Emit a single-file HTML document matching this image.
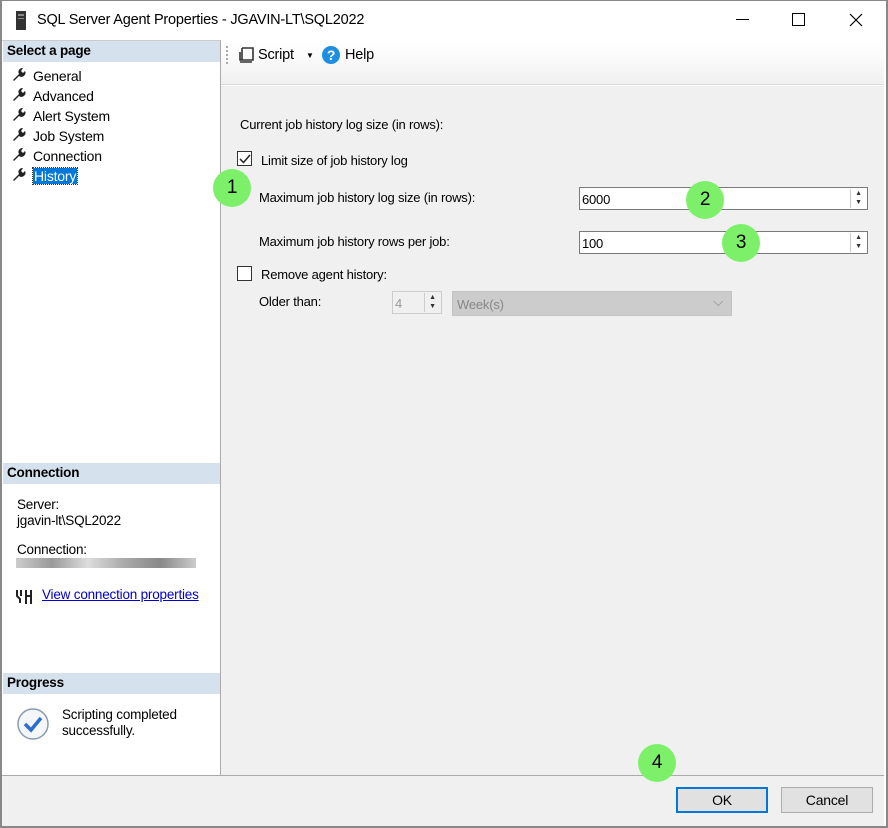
<!DOCTYPE html>
<html><head><style>
*{margin:0;padding:0;box-sizing:border-box}
body{width:888px;height:828px;background:#fff;font-family:"Liberation Sans",sans-serif;font-size:13px;color:#000;position:relative;overflow:hidden;letter-spacing:-0.2px}
.a{position:absolute}
.hdr{background:#d5e1ed;font-weight:bold;font-size:13.5px;padding:2px 0 0 4px;height:21px}
.g{border-radius:50%;background:#7df06a;width:38px;height:38px;text-align:center;line-height:38px;font-size:19px}
.inp{background:#fff;border:1px solid #7a7a7a;height:23px;padding:4px 0 0 2px;font-size:13px}
.spin{position:absolute;right:1px;top:1px;width:16px;height:19px;border-left:1px solid #ccc;font-size:7px;line-height:9px;text-align:center;color:#333}
.cb{width:15px;height:15px;border:1px solid #333;background:#fff}
</style></head><body>
<div class="a" style="left:0;top:0;width:888px;height:828px;border:2px solid #888;border-top:1px solid #888"></div>
<svg class="a" style="left:15px;top:11px" width="12" height="19"><rect x="1" y="0" width="10" height="19" fill="#333"/><rect x="3" y="3" width="6" height="2" fill="#888"/><rect x="3" y="7" width="6" height="1" fill="#888"/></svg>
<div class="a" style="left:37px;top:12px;font-size:14.5px">SQL Server Agent Properties - JGAVIN-LT\SQL2022</div>
<div class="a" style="left:736px;top:19px;width:13px;height:1px;background:#000"></div>
<div class="a" style="left:792px;top:13px;width:13px;height:13px;border:1px solid #000"></div>
<svg class="a" style="left:849px;top:13px" width="14" height="14"><path d="M1 1L13 13M13 1L1 13" stroke="#000" stroke-width="1.2"/></svg>
<div class="a" style="left:2px;top:40px;width:219px;height:736px;background:#fff;border-right:1px solid #aaa;border-top:1px solid #ccc"></div>
<div class="a hdr" style="left:3px;top:41px;width:217px">Select a page</div>
<div class="a" style="left:33px;top:66px;line-height:20px;font-size:14px">
<div>General</div><div>Advanced</div><div>Alert System</div><div>Job System</div><div>Connection</div><div><span style="background:#0078d7;color:#fff;outline:1px dotted #333;padding:0 1px">History</span></div></div>
<svg class="a" style="left:10px;top:67px" width="16" height="120">
<g fill="#222"><path id="w" d="M3 13L9 7A4 4 0 0 1 13 1L11 4L13 6L15 4A4 4 0 0 1 9 9L4 14Z"/>
<use href="#w" y="20"/><use href="#w" y="40"/><use href="#w" y="60"/><use href="#w" y="80"/><use href="#w" y="100"/></g></svg>
<div class="a hdr" style="left:3px;top:463px;width:217px">Connection</div>
<div class="a" style="left:17px;top:497px;line-height:16px;font-size:13.5px">Server:<br>jgavin-lt\SQL2022</div>
<div class="a" style="left:17px;top:542px;font-size:13.5px">Connection:</div>
<div class="a" style="left:16px;top:558px;width:180px;height:10px;background:linear-gradient(90deg,#ccc,#999 20%,#ddd 40%,#aaa 60%,#888 80%,#ccc)"></div>
<svg class="a" style="left:15px;top:588px" width="20" height="16"><path d="M2 2v6l3 3v4M6 2v6M11 2v14M16 2v14M11 8h5" stroke="#222" stroke-width="2" fill="none"/></svg>
<div class="a" style="left:42px;top:587px;color:#00c;text-decoration:underline;font-size:13.5px">View connection properties</div>
<div class="a hdr" style="left:3px;top:673px;width:217px">Progress</div>
<svg class="a" style="left:16px;top:707px" width="34" height="34"><circle cx="17" cy="17" r="15" fill="#f4f6fa" stroke="#8a9ab5" stroke-width="1.5"/><path d="M9 17l6 6 10-12" stroke="#2a6fcf" stroke-width="3.5" fill="none"/></svg>
<div class="a" style="left:62px;top:707px;line-height:16px;font-size:13.5px">Scripting completed<br>successfully.</div>
<div class="a" style="left:221px;top:41px;width:663px;height:44px;background:linear-gradient(#fff,#fafafa 40%,#f0f0f0);border-bottom:1px solid #ddd"></div>
<div class="a" style="left:226px;top:46px;width:2px;height:18px;border-left:2px dotted #aaa"></div>
<svg class="a" style="left:237px;top:46px" width="18" height="18"><path d="M5 2h11v12H3V6M5 2v12M3 16h12" stroke="#333" stroke-width="1.6" fill="none"/></svg>
<div class="a" style="left:258px;top:47px;font-size:14.5px">Script</div>
<div class="a" style="left:306px;top:51px;font-size:8px">▼</div>
<div class="a" style="left:322px;top:46px;width:18px;height:18px;border-radius:50%;background:#1e8fe0;color:#fff;font-weight:bold;text-align:center;line-height:18px;font-size:14px">?</div>
<div class="a" style="left:345px;top:47px;font-size:14.5px">Help</div>
<div class="a" style="left:221px;top:86px;width:663px;height:690px;background:#f0f0f0"></div>
<div class="a" style="left:240px;top:117px">Current job history log size (in rows):</div>
<div class="a cb" style="left:237px;top:151px"></div>
<svg class="a" style="left:238px;top:152px" width="14" height="14"><path d="M2 7l3.5 3.5L12 3" stroke="#222" stroke-width="1.5" fill="none"/></svg>
<div class="a" style="left:261px;top:153px">Limit size of job history log</div>
<div class="a" style="left:259px;top:190px">Maximum job history log size (in rows):</div>
<div class="a inp" style="left:579px;top:187px;width:289px">6000<div class="spin">▲<br>▼</div></div>
<div class="a" style="left:259px;top:234px">Maximum job history rows per job:</div>
<div class="a inp" style="left:579px;top:231px;width:289px">100<div class="spin">▲<br>▼</div></div>
<div class="a cb" style="left:237px;top:266px"></div>
<div class="a" style="left:261px;top:267px">Remove agent history:</div>
<div class="a" style="left:259px;top:294px">Older than:</div>
<div class="a inp" style="left:392px;top:291px;width:50px;border-color:#ccc;color:#999;background:#f0f0f0">4<div class="spin" style="background:#f0f0f0">▲<br>▼</div></div>
<div class="a" style="left:452px;top:291px;width:280px;height:25px;background:#ccc;border:1px solid #c4c4c4;color:#888;padding:5px 0 0 4px">Week(s)<span style="position:absolute;right:8px;top:2px">⌵</span></div>
<div class="a" style="left:2px;top:775px;width:882px;height:1px;background:#aaa"></div>
<div class="a" style="left:2px;top:776px;width:882px;height:50px;background:#f0f0f0"></div>
<div class="a" style="left:676px;top:787px;width:92px;height:26px;border:2px solid #0078d7;background:#e1e1e1;text-align:center;line-height:22px;font-size:14px">OK</div>
<div class="a" style="left:781px;top:787px;width:92px;height:26px;border:1px solid #adadad;background:#e1e1e1;text-align:center;line-height:24px;font-size:14px">Cancel</div>
<div class="a g" style="left:213px;top:169px">1</div>
<div class="a g" style="left:686px;top:181px">2</div>
<div class="a g" style="left:722px;top:224px">3</div>
<div class="a g" style="left:638px;top:744px">4</div>
</body></html>
